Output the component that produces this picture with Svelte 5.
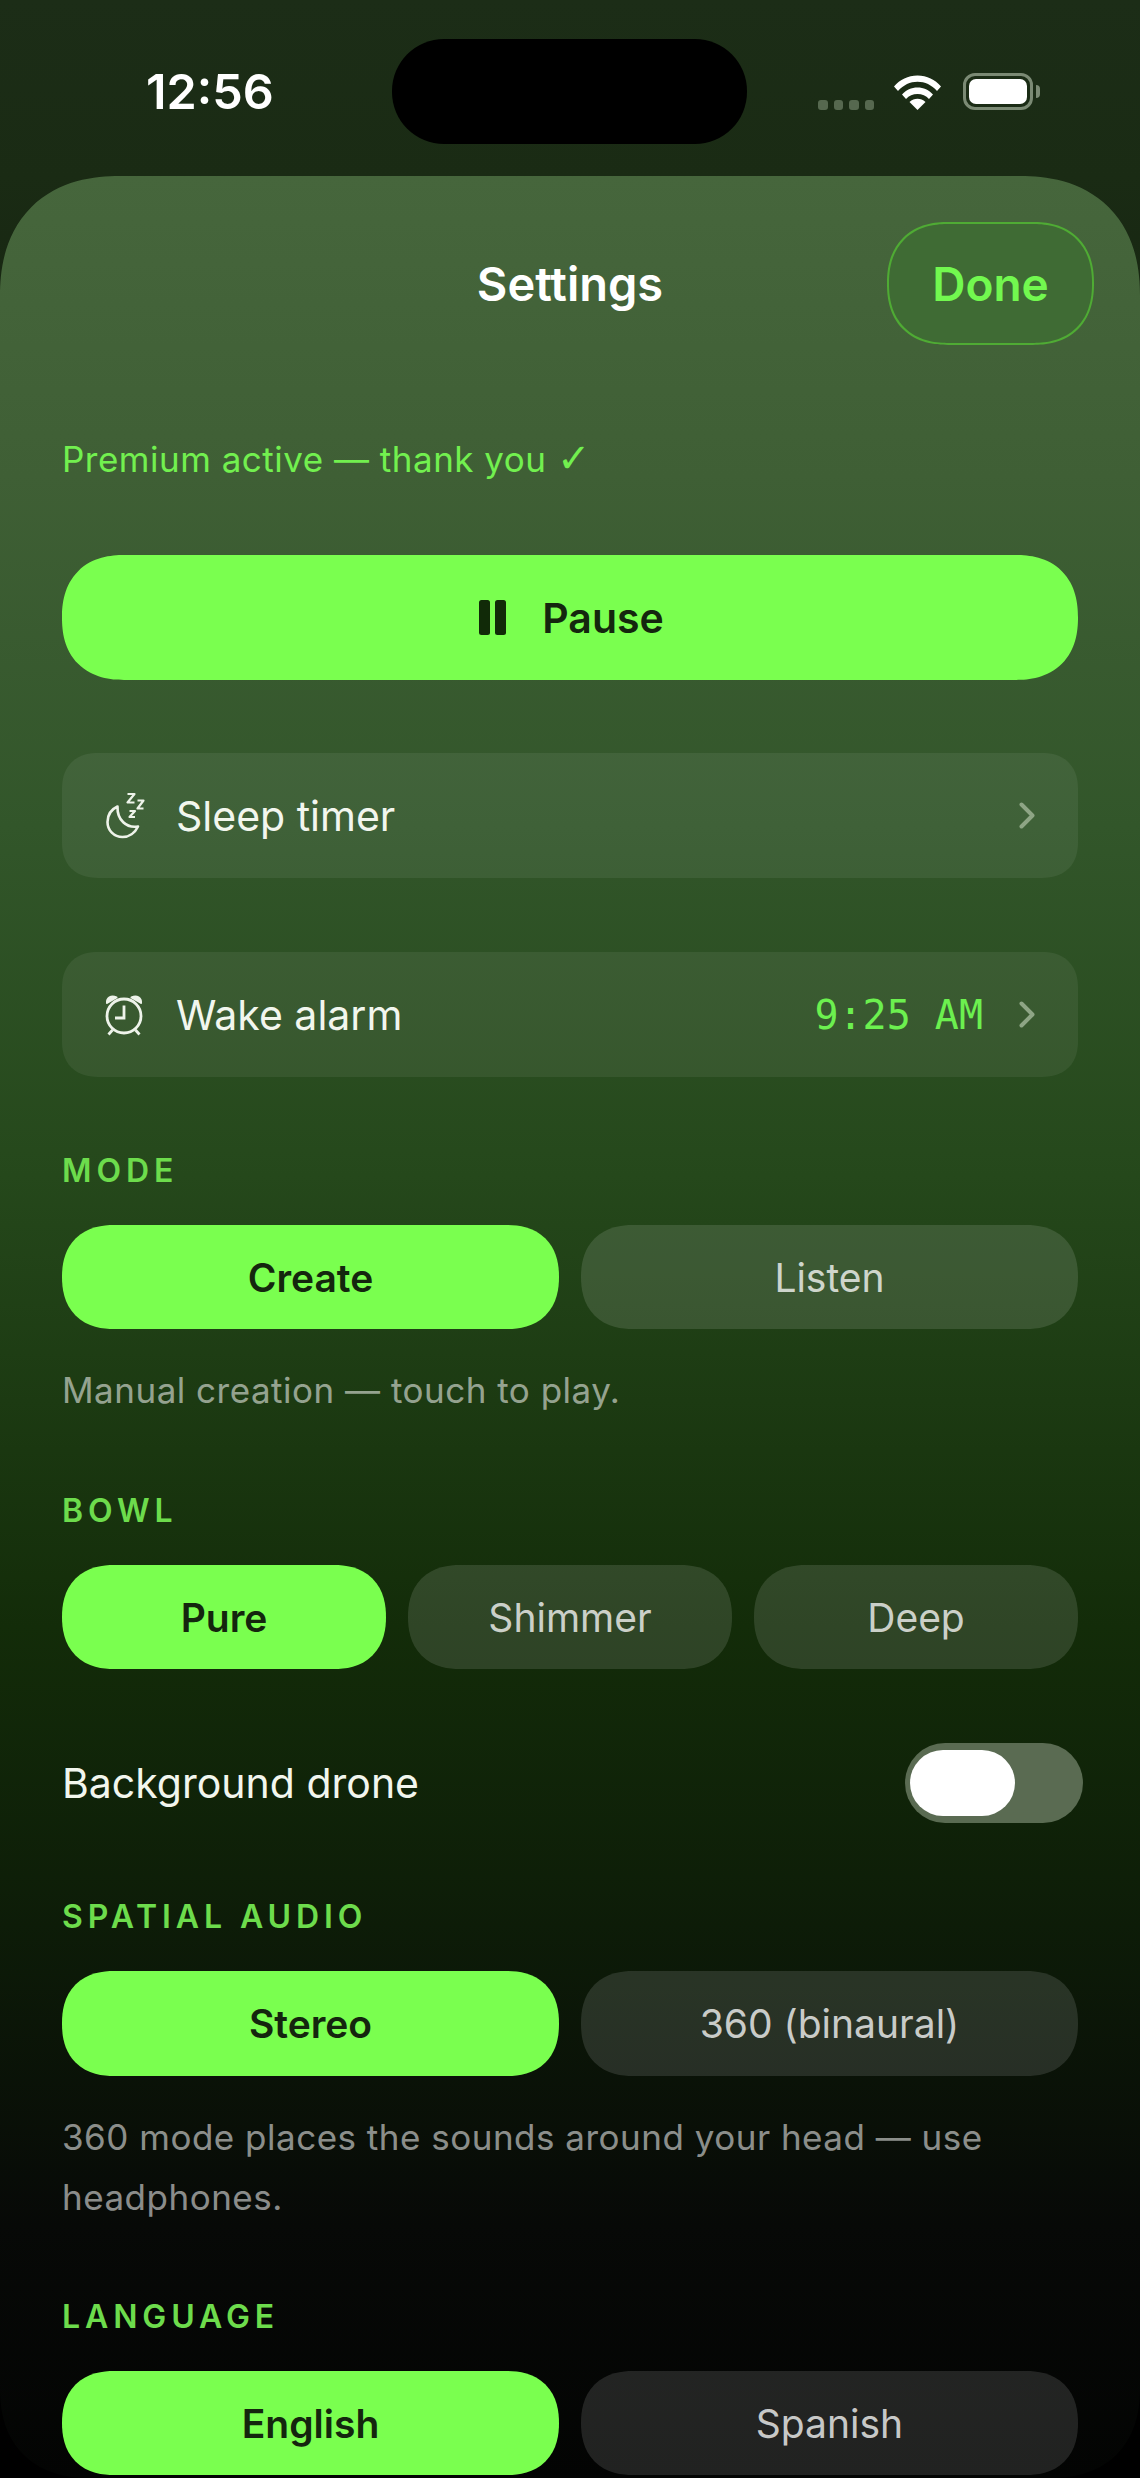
<script>
	const bowls = [
		{ label: 'Pure', active: true },
		{ label: 'Shimmer' },
		{ label: 'Deep' }
	];
</script>

<div class="phone">
	<header class="status">
		<span class="time">12:56</span>
		<div class="island"></div>
		<div class="status-icons">
			<div class="dots"><i></i><i></i><i></i><i></i></div>
			<svg class="wifi" viewBox="0 0 47 35" width="47" height="35">
				<path d="M0 11.500C6 4.500 14 0.500 23.500 0.500S41 4.500 47 11.500L43 16C37.500 10 31 6.800 23.500 6.800S9.500 10 4 16Z" fill="#fff" />
				<path d="M8 19.500C12 15 17.500 12.500 23.500 12.500S35 15 39 19.500L35 24C32 20.800 28 19 23.500 19S15 20.800 12 24Z" fill="#fff" />
				<path d="M15.500 27C18 24.800 20.500 23.800 23.500 23.800S29 24.800 31.500 27L23.500 35Z" fill="#fff" />
			</svg>
			<div class="battery"><div class="charge"></div></div>
		</div>
	</header>

	<main class="sheet">
		<div class="sheet-head">
			<span></span>
			<h1>Settings</h1>
			<button class="done">Done</button>
		</div>

		<p class="premium">Premium active — thank you <span class="tick">✓</span></p>

		<button class="pause">
			<svg viewBox="0 0 27 35" width="27" height="35">
				<rect x="0" y="0" width="11" height="35" rx="2.500" fill="#112a08" />
				<rect x="16" y="0" width="11" height="35" rx="2.500" fill="#112a08" />
			</svg>
			Pause
		</button>

		<div class="row sleep">
			<svg class="row-icon" viewBox="0 0 42 50" width="42" height="50" fill="none" stroke="#eef3ea" stroke-width="2.600" stroke-linejoin="round">
				<path d="M11.500 15.500C5 18.500 1.500 24.500 1.500 31C1.500 39.500 8 46 16.500 46C23 46 29 42 32 35.500C20.500 37.500 11 29 11.500 15.500Z" />
				<path d="M21.500 3H28.500L21.500 11.500H28.500M31.500 9.500H37.500L31.500 17.500H37.500M23.500 20H29L23.500 26H29" stroke-width="2.200" />
			</svg>
			<span>Sleep timer</span>
			<svg class="chev" viewBox="0 0 16 27" width="16" height="27"><path d="M2.500 2.500L13.500 13.500L2.500 24.500" fill="none" stroke="#8ea585" stroke-width="4" stroke-linecap="round" stroke-linejoin="round" /></svg>
		</div>

		<div class="row wake">
			<svg class="row-icon alarm" viewBox="0 0 42 44" width="42" height="44" fill="none" stroke="#eef3ea" stroke-width="2.800">
				<circle cx="21" cy="23" r="17" />
				<path d="M21 12.500V25H12" />
				<path d="M4 10C3.500 5 8 2 13.500 4.500Z M38 10C38.500 5 34 2 28.500 4.500Z" fill="#eef3ea" stroke-width="2" stroke-linejoin="round" />
				<path d="M9.500 37L5.500 41.500M32.500 37L36.500 41.500" />
			</svg>
			<span>Wake alarm</span>
			<span class="alarm-time">9:25 AM</span>
			<svg class="chev" viewBox="0 0 16 27" width="16" height="27"><path d="M2.500 2.500L13.500 13.500L2.500 24.500" fill="none" stroke="#8ea585" stroke-width="4" stroke-linecap="round" stroke-linejoin="round" /></svg>
		</div>

		<h2 class="mode-label">MODE</h2>
		<div class="seg two">
			<button class="on">Create</button>
			<button>Listen</button>
		</div>
		<p class="note">Manual creation — touch to play.</p>

		<h2 class="bowl-label">BOWL</h2>
		<div class="seg three">
			{#each bowls as b}
				<button class:on={b.active}>{b.label}</button>
			{/each}
		</div>

		<div class="drone">
			<span>Background drone</span>
			<div class="toggle"><div class="knob"></div></div>
		</div>

		<h2 class="spatial-label">SPATIAL AUDIO</h2>
		<div class="seg two tall">
			<button class="on">Stereo</button>
			<button>360 (binaural)</button>
		</div>
		<p class="note">360 mode places the sounds around your head — use headphones.</p>

		<h2 class="lang-label">LANGUAGE</h2>
		<div class="seg two lang">
			<button class="on">English</button>
			<button>Spanish</button>
		</div>
	</main>
</div>

<style>
	:global(body) {
		background: #000;
	}

	.phone {
		width: 1140px;
		height: 2478px;
		overflow: hidden;
		font-family: Inter, 'Noto Sans', sans-serif;
		color: #fff;
		background: linear-gradient(#1c2d17 0, #1a2b14 176px, #000 1500px);
	}

	.status {
		height: 176px;
		box-sizing: border-box;
		padding: 39px 80px 0 146px;
		display: flex;
		align-items: flex-start;
	}

	.time {
		width: 246px;
		margin-top: 24px;
		font-size: 48.500px;
		line-height: 58px;
		font-weight: 600;
	}

	.island {
		width: 355px;
		height: 105px;
		border-radius: 52px;
		background: #000;
	}

	.status-icons {
		margin-left: 71px;
		margin-top: 34px;
		display: flex;
		align-items: flex-start;
	}

	.dots {
		display: flex;
		gap: 6px;
		margin-top: 27px;
	}

	.dots i {
		width: 9.500px;
		height: 10px;
		border-radius: 3px;
		background: #56684f;
	}

	.wifi {
		margin-left: 20px;
		margin-top: 2px;
	}

	.battery {
		position: relative;
		box-sizing: border-box;
		width: 70px;
		height: 37px;
		margin-left: 22px;
		border: 3px solid #7b8a74;
		border-radius: 12px;
		padding: 3px;
	}

	.battery::after {
		content: '';
		position: absolute;
		right: -10px;
		top: 9px;
		width: 4px;
		height: 13px;
		border-radius: 0 6px 6px 0;
		background: #7b8a74;
	}

	.charge {
		height: 100%;
		border-radius: 7px;
		background: #fff;
	}

	.sheet {
		height: 2302px;
		box-sizing: border-box;
		padding: 0 62px;
		border-radius: 120px 120px 90px 90px;
		corner-shape: superellipse(1.2);
		background: linear-gradient(
			#46663c 0,
			#3f5f35 300px,
			#32562a 650px,
			#25481b 1000px,
			#132c09 1450px,
			#0e1f08 1700px,
			#070907 2050px,
			#030403 2302px
		);
	}

	.sheet-head {
		display: grid;
		grid-template-columns: 1fr auto 1fr;
		align-items: center;
		padding-top: 46px;
		margin: 0 -16px;
	}

	h1 {
		margin: 0;
		font-size: 47px;
		font-weight: 600;
		line-height: 56px;
	}

	button {
		border: 0;
		padding: 0;
		font-family: inherit;
		cursor: pointer;
	}

	.done {
		justify-self: end;
		width: 207px;
		height: 123px;
		border-radius: 61px;
		corner-shape: superellipse(1.2);
		border: 2.500px solid #4fab34;
		background: #3f6b34;
		color: #72f84f;
		font-size: 46px;
		font-weight: 600;
	}

	.premium {
		margin: 92px 0 0;
		height: 44px;
		font-size: 35px;
		letter-spacing: 0.500px;
		line-height: 44px;
		color: #72f04f;
	}

	.tick {
		font-family: 'DejaVu Sans', sans-serif;
		font-size: 40px;
		line-height: 0;
	}

	.pause {
		margin-top: 74px;
		padding-left: 3px;
		width: 100%;
		height: 125px;
		border-radius: 62px;
		corner-shape: superellipse(1.2);
		background: #7aff4f;
		color: #14260e;
		font-size: 41px;
		font-weight: 600;
		display: flex;
		align-items: center;
		justify-content: center;
		gap: 36px;
	}

	.row {
		height: 125px;
		border-radius: 36px;
		corner-shape: superellipse(1.2);
		background: #fff1;
		padding: 0 43px 0 44px;
		display: flex;
		align-items: center;
		font-size: 41px;
		color: #f2f6ee;
	}

	.sleep {
		margin-top: 73px;
	}

	.wake {
		margin-top: 74px;
	}

	.row-icon {
		width: 42px;
		margin-right: 28px;
	}

	.row-icon.alarm {
		margin-left: -3px;
		margin-right: 31px;
	}

	.alarm-time {
		margin-left: auto;
		margin-right: 36px;
		font-family: 'DejaVu Sans Mono', 'Liberation Mono', monospace;
		font-size: 40px;
		color: #6cf04f;
	}

	.sleep .chev {
		margin-left: auto;
	}

	h2 {
		margin: 0;
		font-size: 32px;
		line-height: 36px;
		font-weight: 600;
		letter-spacing: 4.900px;
		color: #6ddc4c;
	}

	.mode-label {
		margin-top: 76px;
	}

	.bowl-label {
		margin-top: 73px;
	}

	.spatial-label {
		margin-top: 76px;
	}

	.lang-label {
		margin-top: 72px;
	}

	.seg {
		margin-top: 36px;
		display: grid;
		gap: 22px;
	}

	.seg.two {
		grid-template-columns: 1fr 1fr;
	}

	.seg.three {
		grid-template-columns: 1fr 1fr 1fr;
	}

	.seg button {
		height: 104px;
		border-radius: 52px;
		corner-shape: superellipse(1.2);
		background: #ffffff1f;
		color: #ffffffc4;
		font-size: 39px;
	}

	.seg.tall button {
		height: 105px;
	}

	.seg button.on {
		background: #7aff4f;
		color: #14260e;
		font-weight: 600;
	}

	.note {
		margin: 31px 0 0;
		font-size: 35px;
		letter-spacing: 0.500px;
		line-height: 60px;
		color: #ffffff8c;
	}

	.drone {
		margin-top: 74px;
		margin-right: -5px;
		display: flex;
		align-items: center;
		justify-content: space-between;
		font-size: 41px;
		color: #f2f6ee;
	}

	.toggle {
		width: 178px;
		height: 80px;
		box-sizing: border-box;
		border-radius: 40px;
		padding: 7px 5px;
		background: #5a6b52;
	}

	.knob {
		width: 105px;
		height: 66px;
		border-radius: 33px;
		background: #fff;
	}
</style>
